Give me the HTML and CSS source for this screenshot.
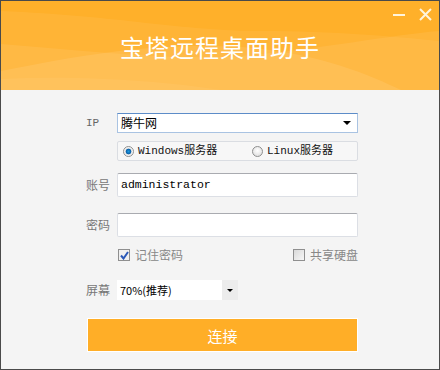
FILE: index.html
```html
<!DOCTYPE html>
<html lang="zh-CN">
<head>
    <meta charset="UTF-8">
    <title>宝塔远程桌面助手</title>
    <link rel="stylesheet" href="styles.css">
</head>
<body>
    <div class="window">
        <div class="header">
            <svg class="waves" width="438" height="89" viewBox="0 0 438 89">
                <path d="M0 10 C120 15 180 30 260 30 C330 30 400 36 438 40 L438 89 L0 89 Z" fill="rgba(255,255,255,0.06)"/>
                <path d="M0 43 C90 50 170 60 240 55 C320 48 390 34 438 30 L438 89 L0 89 Z" fill="rgba(255,255,255,0.07)"/>
                <path d="M0 70 C100 50 160 42 240 46 C320 52 370 75 400 89 L0 89 Z" fill="rgba(255,255,255,0.09)"/>
                <path d="M0 78 C80 74 160 80 220 89 L0 89 Z" fill="rgba(255,255,255,0.05)"/>
            </svg>
            <div class="win-controls">
                <span class="btn-min"></span>
                <svg class="btn-close" width="13" height="13" viewBox="0 0 13 13">
                    <path d="M1 1 L12 12 M12 1 L1 12" stroke="#fff4dc" stroke-width="2"/>
                </svg>
            </div>
            <h1 class="title">宝塔远程桌面助手</h1>
        </div>

        <div class="form">
            <div class="row">
                <span class="label label-ip">IP</span>
                <div class="select focused">
                    <span class="select-text">腾牛网</span>
                    <span class="arrow"></span>
                </div>
            </div>

            <div class="row row-radio">
                <span class="label"></span>
                <div class="radio-group">
                    <span class="radio-item first"><span class="radio checked"></span>Windows服务器</span>
                    <span class="radio-item"><span class="radio"></span>Linux服务器</span>
                </div>
            </div>

            <div class="row row-user">
                <span class="label">账号</span>
                <div class="input"><span class="input-text">administrator</span></div>
            </div>

            <div class="row row-pass">
                <span class="label">密码</span>
                <div class="input"></div>
            </div>

            <div class="row row-check">
                <span class="label"></span>
                <div class="check-line">
                    <span class="check-item"><span class="checkbox checked">
                        <svg width="9" height="9" viewBox="0 0 9 9"><path d="M1 4.5 L3.5 7.5 L8 1" stroke="#2a58b8" stroke-width="2" fill="none"/></svg>
                    </span>记住密码</span>
                    <span class="check-item"><span class="checkbox"></span>共享硬盘</span>
                </div>
            </div>

            <div class="row row-screen">
                <span class="label">屏幕</span>
                <div class="combo">
                    <span class="combo-text">70%(推荐)</span>
                    <span class="combo-btn"><span class="arrow small"></span></span>
                </div>
            </div>

            <button class="connect">连接</button>
        </div>
    </div>
</body>
</html>
```

FILE: styles.css
```css
body {
    margin: 0;
    background: #f4f4f4;
    font-family: "Noto Sans CJK SC", "DejaVu Sans", sans-serif;
    font-size: 12px;
}
.window {
    width: 440px;
    height: 370px;
    box-sizing: border-box;
    border: 1px solid #4a4a4a;
    background: #f4f4f4;
}
.header {
    position: relative;
    height: 89px;
    background: #ffb02a;
    overflow: hidden;
}
.waves {
    position: absolute;
    left: 0;
    top: 0;
}
.win-controls {
    position: absolute;
    top: 7px;
    right: 7px;
    display: flex;
    align-items: center;
    gap: 14px;
}
.btn-min {
    display: block;
    width: 12px;
    height: 2px;
    background: #fff4dc;
}
.btn-close {
    display: block;
}
.title {
    position: relative;
    margin: 0;
    padding-top: 30px;
    text-align: center;
    color: #fff;
    font-size: 24px;
    font-weight: normal;
    line-height: 32px;
    letter-spacing: 1px;
}
.form {
    padding: 23px 0 0 85px;
    width: 272px;
    line-height: 14px;
}
.row {
    display: flex;
    align-items: center;
}
.label {
    width: 31px;
    flex: none;
    color: #777;
    font-size: 12px;
}
.label-ip {
    font-family: "Liberation Mono", monospace;
    font-size: 11px;
    color: #666;
}
.select {
    flex: 1;
    height: 20px;
    box-sizing: border-box;
    border: 1px solid #a9c3e2;
    border-top-color: #5c8cc8;
    background: #fff;
    display: flex;
    align-items: center;
    justify-content: space-between;
    padding: 0 4px 0 3px;
}
.select-text {
    color: #000;
    font-size: 12px;
}
.arrow {
    width: 0;
    height: 0;
    border-left: 4px solid transparent;
    border-right: 4px solid transparent;
    border-top: 4px solid #000;
    margin-right: 2px;
}
.arrow.small {
    border-left-width: 3px;
    border-right-width: 3px;
    border-top-width: 3px;
    margin: 0;
}
.row-radio {
    margin-top: 8px;
}
.radio-group {
    flex: 1;
    min-width: 0;
    height: 20px;
    box-sizing: border-box;
    border: 1px solid #dadde2;
    border-radius: 2px;
    background: #f7f7f7;
    display: flex;
    align-items: center;
    padding-left: 5px;
    font-family: "Liberation Mono", "Noto Sans CJK SC", monospace;
    font-size: 11px;
    color: #111;
}
.radio-item {
    display: flex;
    align-items: center;
}
.radio-item.first {
    width: 129px;
}
.radio {
    width: 11px;
    height: 11px;
    box-sizing: border-box;
    border-radius: 50%;
    border: 1px solid #8e8f8f;
    background: radial-gradient(circle at 50% 40%, #fff, #d8d8d8);
    margin-right: 4px;
}
.radio.checked {
    background: radial-gradient(circle, #1c9be0 0, #0a5fa8 2.5px, #e6e6e6 3.2px, #fff 5px);
}
.row-user {
    margin-top: 12px;
}
.row-pass {
    margin-top: 16px;
}
.input {
    flex: 1;
    height: 24px;
    box-sizing: border-box;
    border: 1px solid #dcdfe5;
    border-top-color: #a9abb0;
    border-radius: 2px;
    background: #fff;
    display: flex;
    align-items: center;
    padding-left: 3px;
}
.input-text {
    font-family: "Liberation Mono", monospace;
    font-size: 11.5px;
    color: #000;
}
.row-check {
    margin-top: 11px;
}
.check-line {
    flex: 1;
    display: flex;
    justify-content: space-between;
    padding-left: 1px;
}
.check-item {
    display: flex;
    align-items: center;
    color: #888;
    font-size: 12px;
    line-height: 14px;
}
.checkbox {
    width: 12px;
    height: 12px;
    box-sizing: border-box;
    border: 1px solid #8f8f8f;
    background: linear-gradient(135deg, #d9d9d9, #f7f7f7);
    margin-right: 5px;
    display: flex;
    align-items: center;
    justify-content: center;
}
.checkbox.checked {
    background: #f0f0f0;
}
.row-screen {
    margin-top: 18px;
}
.combo {
    width: 121px;
    height: 20px;
    background: #fff;
    display: flex;
    align-items: center;
}
.combo-text {
    flex: 1;
    padding-left: 3px;
    font-size: 11px;
    color: #000;
}
.combo-btn {
    width: 16px;
    height: 20px;
    background: #ececec;
    display: flex;
    align-items: center;
    justify-content: center;
}
.connect {
    display: block;
    margin-top: 18px;
    margin-left: 1px;
    width: 271px;
    height: 34px;
    border: 1px solid #fff;
    background: #ffae27;
    color: #fff;
    font-family: "Noto Sans CJK SC", sans-serif;
    font-size: 15px;
    cursor: pointer;
}
```
